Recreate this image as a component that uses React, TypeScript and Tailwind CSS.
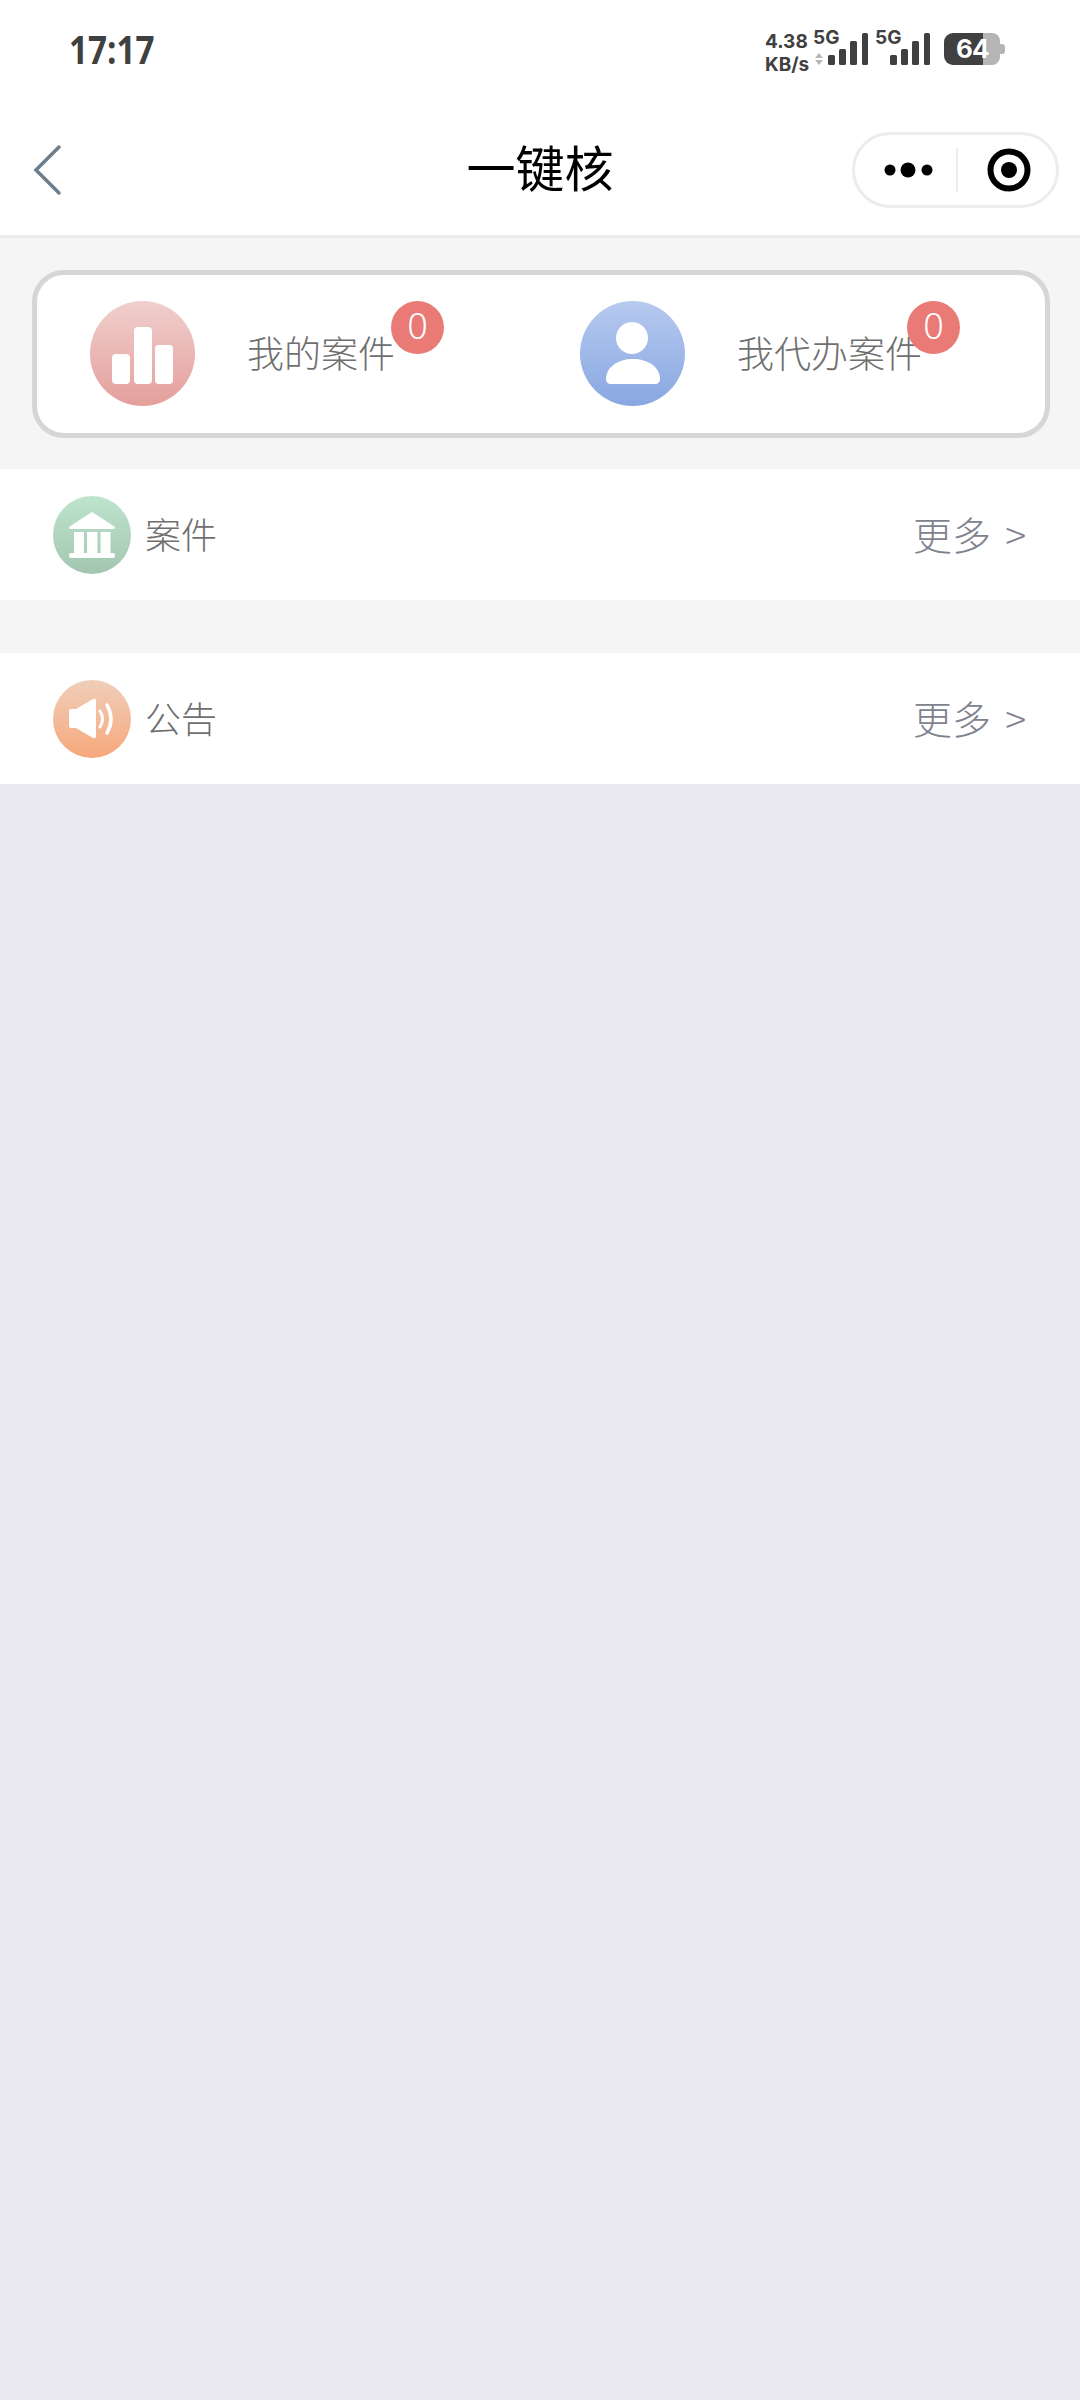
const cjk = { fontFamily: '"Noto Sans CJK SC", "Noto Sans", sans-serif' }

function SignalBars({ arrows }: { arrows?: boolean }) {
  return (
    <svg width="55" height="35" viewBox="0 0 55 35" fill="#404040">
      {arrows && (
        <>
          <path d="M6 23 L10 28 H2 Z" fill="#b8b8b8" />
          <path d="M6 35 L10 30 H2 Z" fill="#b8b8b8" />
        </>
      )}
      <rect x="15" y="25" width="7" height="10" rx="1.5" />
      <rect x="26" y="19" width="7" height="16" rx="1.5" />
      <rect x="37" y="11" width="7" height="24" rx="1.5" />
      <rect x="49" y="3" width="6" height="32" rx="1.5" />
    </svg>
  )
}

function StatusBar() {
  return (
    <div className="h-[105px] flex justify-between pl-[69px] pr-[75px] text-[#404040]">
      <div className="pt-[23px] text-[40px] leading-[52px] font-bold origin-left scale-x-[0.83]" style={{ fontFamily: '"Open Sans", sans-serif' }}>
        17:17
      </div>
      <div className="flex pt-[30px] h-[65px]" style={{ fontFamily: 'Inter, sans-serif' }}>
        <div className="w-[48px] text-[19px] font-bold leading-[23px]">
          <div>4.38</div>
          <div>KB/s</div>
        </div>
        <div className="relative w-[55px] h-[35px]">
          <SignalBars arrows />
          <span className="absolute left-0 top-0 text-[19px] font-bold leading-[15px]">5G</span>
        </div>
        <div className="relative w-[55px] h-[35px] ml-[7px]">
          <SignalBars />
          <span className="absolute left-0 top-0 text-[19px] font-bold leading-[15px]">5G</span>
        </div>
        <div className="relative ml-[14px] w-[61px] h-[32px] mt-[3px]">
          <svg width="61" height="32" viewBox="0 0 61 32">
            <path d="M30 0 H48 a8 8 0 0 1 8 8 V24 a8 8 0 0 1 -8 8 H30 Z" fill="#b5b5b5" />
            <path d="M56 11 h2 a3 3 0 0 1 3 3 v4 a3 3 0 0 1 -3 3 h-2 Z" fill="#b5b5b5" />
            <path d="M39 0 H9 a9 9 0 0 0 -9 9 V23 a9 9 0 0 0 9 9 H39 Z" fill="#404040" />
          </svg>
          <span className="absolute left-[12px] top-0 text-[26px] leading-[32px] font-bold tracking-[-1px] text-white">64</span>
        </div>
      </div>
    </div>
  )
}

function NavBar() {
  return (
    <div className="h-[133px] pb-[3px] border-b-[3px] border-[#ececec] grid grid-cols-[1fr_auto_1fr] items-center">
      <div className="pl-[32px] mt-[3px]">
        <svg width="30" height="52" viewBox="0 0 30 52" fill="none" stroke="#6c7d8c" strokeWidth="3.5" strokeLinecap="round">
          <path d="M27 3 L4 26 L27 49" />
        </svg>
      </div>
      <div className="text-[49px] leading-[64px] text-black mb-[6px]" style={cjk}>一键核</div>
      <div className="flex justify-end pr-[21px]">
        <div className="w-[207px] h-[76px] mt-[2px] rounded-full border-[3px] border-[#ececec] flex items-center">
          <div className="w-[101px] pl-[6px] flex justify-center">
            <svg width="50" height="16" viewBox="0 0 50 16" fill="#000">
              <circle cx="6" cy="8" r="5.5" />
              <circle cx="24" cy="8" r="7.5" />
              <circle cx="43" cy="8" r="5.5" />
            </svg>
          </div>
          <div className="w-[2px] h-[44px] bg-[#ececec]" />
          <div className="flex-1 pl-[4px] flex justify-center">
            <svg width="44" height="44" viewBox="0 0 44 44">
              <circle cx="22" cy="22" r="18.5" fill="none" stroke="#000" strokeWidth="6" />
              <circle cx="22" cy="22" r="8" fill="#000" />
            </svg>
          </div>
        </div>
      </div>
    </div>
  )
}

function CaseItem({ label, badgeRight, className, icon, gradient }: {
  label: string
  badgeRight: number
  className: string
  icon: React.ReactNode
  gradient: string
}) {
  return (
    <div className={`flex items-center ${className}`}>
      <div className={`w-[105px] h-[105px] rounded-full ${gradient}`}>{icon}</div>
      <div className="relative ml-[52px] mb-[5px] text-[37px] leading-[48px] font-light text-[#6f6f6f]">
        {label}
        <span
          className="absolute top-[-27px] w-[53px] h-[53px] rounded-full bg-[#ea7a75] text-white text-[36px] font-light leading-[50px] text-center"
          style={{ right: badgeRight, fontFamily: '"Noto Sans", sans-serif' }}
        >
          0
        </span>
      </div>
    </div>
  )
}

function ListRow({ label, icon, gradient }: { label: string; icon: React.ReactNode; gradient: string }) {
  return (
    <div className="h-[131px] bg-white flex items-center justify-between pl-[53px] pr-[54px]">
      <div className="flex items-center">
        <div className={`w-[78px] h-[78px] rounded-full ${gradient}`}>{icon}</div>
        <span className="ml-[14px] mb-[4px] text-[36px] leading-[48px] font-light text-[#6f6f6f]">{label}</span>
      </div>
      <div className="flex items-center mb-[4px] text-[39px] leading-[50px] font-light text-[#80828f]">
        <span>更多</span>
        <span className="ml-[14px]">&gt;</span>
      </div>
    </div>
  )
}

export default function App() {
  return (
    <div className="w-[1080px] h-[2400px] flex flex-col bg-white" style={cjk}>
      <StatusBar />
      <NavBar />

      {/* Top card */}
      <div className="bg-[#f5f5f5] pt-[32px] pb-[31px] px-[32px]">
        <div className="h-[168px] bg-white rounded-[32px] border-[5px] border-[#d6d6d6] flex items-center pl-[53px] w-[1018px]">
          <CaseItem
            label="我的案件"
            badgeRight={-49}
            className="w-[490px]"
            gradient="bg-linear-to-b from-[#efcfcd] to-[#e49f9c] -mt-[1px]"
            icon={
              <svg width="105" height="105" viewBox="0 0 105 105" fill="#fff">
                <rect x="22" y="53" width="18" height="30" rx="4" />
                <rect x="44" y="26" width="18" height="57" rx="4" />
                <rect x="65" y="44" width="18" height="39" rx="4" />
              </svg>
            }
          />
          <CaseItem
            label="我代办案件"
            badgeRight={-38}
            className=""
            gradient="bg-linear-to-b from-[#b7caef] to-[#88a7e2] -mt-[1px]"
            icon={
              <svg width="105" height="105" viewBox="0 0 105 105" fill="#fff">
                <circle cx="52" cy="37" r="16" />
                <path d="M26 78 C26 66 38 58 53 58 S80 66 80 78 C80 81 78 83 75 83 H31 C28 83 26 81 26 78 Z" />
              </svg>
            }
          />
        </div>
      </div>

      <ListRow
        label="案件"
        gradient="bg-linear-to-b from-[#bfe4cd] to-[#a2c6af]"
        icon={
          <svg width="78" height="78" viewBox="0 0 78 78" fill="#fff">
            <path d="M39 16 L62 31 Q62 33 60 33 H18 Q16 33 16 31 Z" />
            <rect x="21" y="36" width="10" height="21" />
            <rect x="34" y="36" width="10.5" height="21" />
            <rect x="47.5" y="36" width="10" height="21" />
            <rect x="16" y="57" width="46" height="5" rx="2" />
          </svg>
        }
      />
      <div className="h-[53px] bg-[#f5f5f5]" />
      <ListRow
        label="公告"
        gradient="bg-linear-to-b from-[#efceb9] to-[#f6a87b]"
        icon={
          <svg width="78" height="78" viewBox="0 0 78 78" fill="#fff">
            <path d="M16 31 Q16 29 18 29 H23 L40 19 Q43 18 43 21 V56 Q43 59 40 58 L23 48 H18 Q16 48 16 46 Z" />
            <path d="M47 31 Q52 39 47 47" fill="none" stroke="#fff" strokeWidth="3" strokeLinecap="round" />
            <path d="M54 25 Q62 39 54 53" fill="none" stroke="#fff" strokeWidth="3.5" strokeLinecap="round" />
          </svg>
        }
      />

      <div className="flex-1 bg-[#e9e9ef]" />
    </div>
  )
}
